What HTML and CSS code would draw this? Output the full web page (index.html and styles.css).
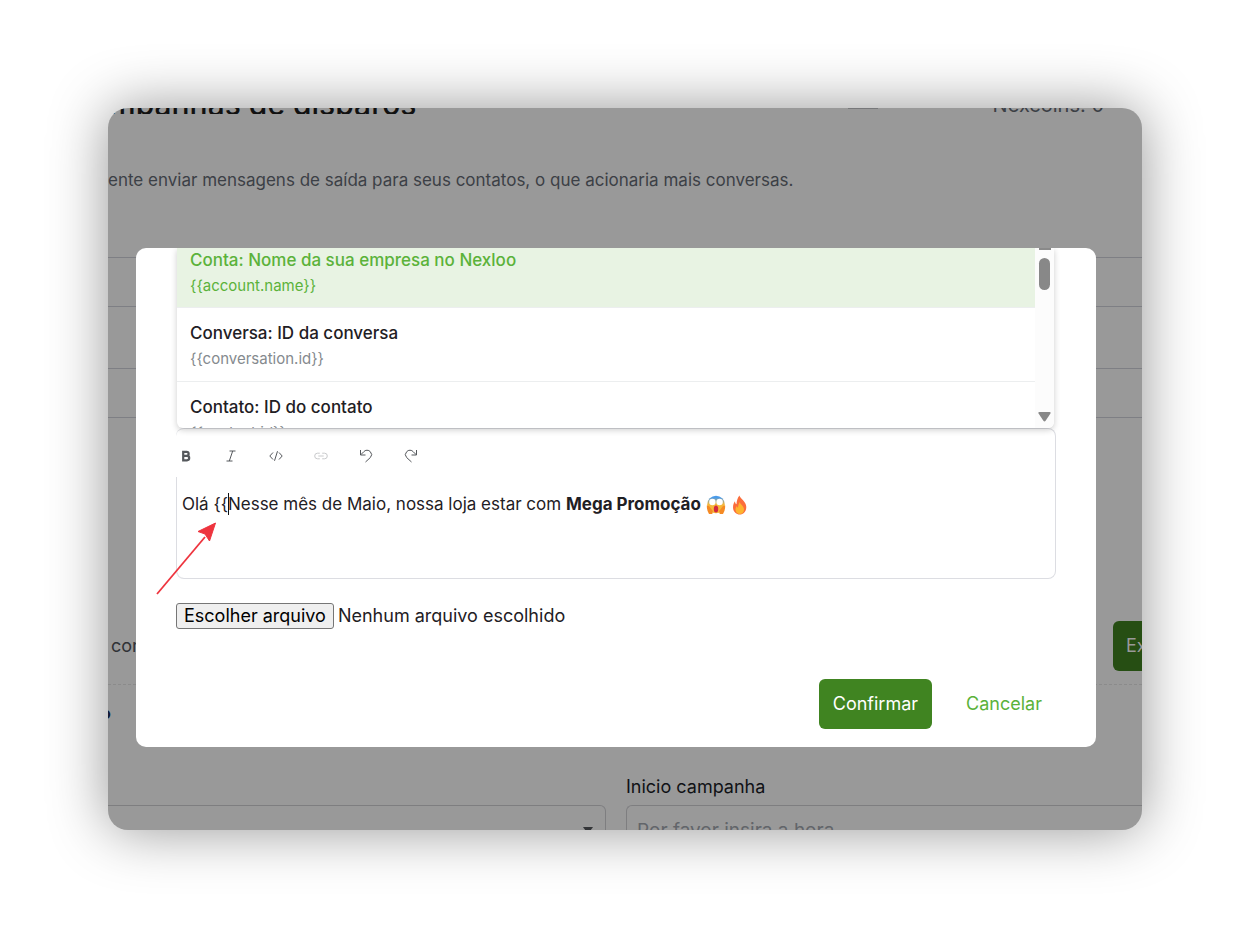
FILE: index.html
```html
<!DOCTYPE html>
<html lang="pt-BR">
<head>
<meta charset="utf-8">
<title>Campanhas de disparos</title>
<link rel="stylesheet" href="styles.css">
</head>
<body>
<main class="frame">
  <section class="page">
    <header class="page-head">
      <h1 class="title">Campanhas de disparos</h1>
      <span class="tab-line"></span>
      <span class="coins">Nexcoins: 0</span>
    </header>
    <p class="intro">ente enviar mensagens de saída para seus contatos, o que acionaria mais conversas.</p>
    <div class="rows">
      <div class="row"></div>
      <div class="row row-tall"></div>
      <div class="row"></div>
    </div>
    <div class="export-row">
      <span>com</span>
      <button class="btn-export" type="button">Exportar</button>
    </div>
    <p class="step">o</p>
    <div class="fields">
      <div class="field">
        <span class="field-label"></span>
        <div class="control control-left"><svg width="10" height="7" viewBox="0 0 10 7"><path d="M0 0h10L5 7z" fill="#333538"/></svg></div>
      </div>
      <div class="field field-right">
        <label class="field-label" for="start">Inicio campanha</label>
        <input class="control control-right" id="start" type="text" placeholder="Por favor insira a hora">
      </div>
    </div>
  </section>

  <div class="overlay">
    <section class="modal" role="dialog" aria-label="Mensagem">
      <div class="suggestions">
        <ul class="options">
          <li class="option option-active"><span class="option-name">Conta: Nome da sua empresa no Nexloo</span><span class="option-key">{{account.name}}</span></li>
          <li class="option"><span class="option-name">Conversa: ID da conversa</span><span class="option-key">{{conversation.id}}</span></li>
          <li class="option"><span class="option-name">Contato: ID do contato</span><span class="option-key">{{contact.id}}</span></li>
        </ul>
        <div class="scrollbar">
          <span class="scroll-up"></span>
          <span class="thumb"></span>
          <svg class="scroll-down" width="13" height="10" viewBox="0 0 13 10"><path d="M1.500 0h10Q13.300.2 12.300 1.800L7.600 8.800Q6.500 10.200 5.400 8.800L.7 1.800Q-.3.2 1.500 0z" fill="#888"/></svg>
        </div>
      </div>

      <div class="editor">
        <div class="toolbar">
          <button type="button" class="tool" aria-label="Negrito"><svg viewBox="0 0 16 16"><path d="M5.200 3.800h3.400a2 2 0 0 1 0 4.100H5.200zm0 4.100h3.800a2.200 2.200 0 0 1 0 4.400H5.200z" stroke-width="2.200"/></svg></button>
          <button type="button" class="tool" aria-label="Itálico"><svg viewBox="0 0 16 16"><path d="M6.500 3h6M3.500 13h6M9.700 3l-3.400 10"/></svg></button>
          <button type="button" class="tool" aria-label="Código"><svg viewBox="0 0 16 16"><path d="M5 4.500L1.800 8 5 11.500M11 4.500L14.200 8 11 11.500M9.500 3.200l-3 9.600"/></svg></button>
          <button type="button" class="tool tool-off" aria-label="Link" disabled><svg viewBox="0 0 16 16"><path d="M6.800 5.200H4.500a2.800 2.800 0 0 0 0 5.600h2.300M9.200 5.200h2.300a2.800 2.800 0 0 1 0 5.600H9.200M5.300 8h5.400"/></svg></button>
          <button type="button" class="tool" aria-label="Desfazer"><svg viewBox="0 0 16 16"><path d="M2.500 2v5h5M2.700 6.800l3-3a4.300 4.300 0 0 1 6.600-.1 4.200 4.200 0 0 1 0 5.900L7.500 14"/></svg></button>
          <button type="button" class="tool" aria-label="Refazer"><svg viewBox="0 0 16 16"><path d="M13.500 2v5h-5M13.300 6.800l-3-3a4.300 4.300 0 0 0-6.600-.1 4.200 4.200 0 0 0 0 5.900L8.500 14"/></svg></button>
        </div>
        <div class="message" role="textbox" aria-label="Mensagem" contenteditable="true" spellcheck="false">Olá {{<span class="caret"></span>Nesse mês de Maio, nossa loja estar com <strong>Mega Promoção</strong> <svg class="emoji" viewBox="0 0 20 20"><defs><linearGradient id="face" x1="0" y1="0" x2="0" y2="1"><stop offset=".1" stop-color="#4a9bea"/><stop offset=".5" stop-color="#f5b73b"/></linearGradient></defs><circle cx="10" cy="9.500" r="8.800" fill="url(#face)"/><circle cx="6.400" cy="7" r="3.200" fill="#fff"/><circle cx="13.600" cy="7" r="3.200" fill="#fff"/><path d="M.8 10.500q2-.5 3 1.500l3 4-.5 3H3Q.8 16 .8 10.500zM19.200 10.500q-2-.5-3 1.500l-3 4 .5 3H17q2.200-3 2.200-8.500z" fill="#f58a24"/><ellipse cx="10" cy="14" rx="2.200" ry="3.500" fill="#d3273e"/></svg> <svg class="emoji" viewBox="0 0 20 20"><path d="M9.500.5c.5 3 6.800 6 6.800 11.500 0 4.600-2.900 7.500-6.500 7.500S3 16.500 3 12.200c0-2.700 1-4.800 2-6 0 1.600.5 2.500 1.500 3C6.700 6 7.500 2.500 9.500.5z" fill="#fb6d3b"/><path d="M9.800 7c.3 2.500 4.200 4 4.200 7.400 0 2.800-1.700 4.600-4.200 4.600s-4.300-1.800-4.300-4.500c0-1.400.6-2.700 1.400-3.400 0 1 .5 1.500 1.100 1.500.3-2 .6-4 1.800-5.600z" fill="#fdb42e"/></svg></div>
        <svg class="pointer" width="62" height="76" viewBox="0 0 62 76"><path d="M2 73L50 16" stroke="#ee343e" stroke-width="1.800"/><path d="M60.500 2L43 10.500l7 2.500 4.500 7z" fill="#ee343e" stroke="#ee343e"/></svg>
      </div>

      <label class="file"><input class="file-input" type="file"><span class="file-btn">Escolher arquivo</span><span>Nenhum arquivo escolhido</span></label>

      <footer class="actions">
        <button type="button" class="btn btn-primary">Confirmar</button>
        <button type="button" class="btn btn-link">Cancelar</button>
      </footer>
    </section>
  </div>
</main>
</body>
</html>
```
FILE: styles.css
```css
* { box-sizing: border-box; }
body {
  margin: 0;
  padding: 108px;
  background: #fff;
  color: #1f2024;
  font: 18px/24px Inter, "Open Sans", sans-serif;
}
h1, p, ul { margin: 0; padding: 0; }
button, input { font: inherit; }

.frame {
  display: grid;
  overflow: hidden;
  border-radius: 20px;
  background: #999;
  box-shadow: 0 0 58px rgba(0, 0, 0, .42);
}
.page, .overlay { grid-area: 1 / 1; min-width: 0; }

.page-head {
  display: flex;
  align-items: flex-end;
  height: 6px;
  overflow: hidden;
}
.title {
  flex: 1;
  margin: 0 0 -8px -38px;
  color: #111;
  font-size: 30px;
  line-height: 36px;
  font-weight: 500;
}
.tab-line { width: 30px; height: 1px; margin: 0 115px 5px 0; background: #77787a; }
.coins { margin: 0 38px -3px 0; color: #3c4046; font-size: 20px; }
.intro { margin-top: 54px; color: #3c4046; font-size: 17px; white-space: nowrap; }

.rows { margin-top: 65px; border-bottom: 1px solid #7e7f84; }
.row { height: 49px; border-top: 1px solid #7e7f84; }
.row-tall { height: 62px; }

.export-row {
  display: flex;
  align-items: center;
  justify-content: space-between;
  margin-top: 203px;
  padding: 0 0 13px 3px;
  border-bottom: 1px dashed #8b8b8b;
  color: #303236;
}
.btn-export {
  width: 100px;
  height: 50px;
  margin-right: -71px;
  padding: 0 13px;
  border: 0;
  border-radius: 6px;
  background: #264e13;
  color: #999;
  text-align: left;
}
.step { margin: 16px 0 0 -7px; color: #101a30; font-size: 16px; font-weight: 700; }

.fields {
  display: grid;
  grid-template-columns: 498px 1fr;
  gap: 20px;
  height: 105px;
  padding-top: 50px;
  overflow: hidden;
}
.field { display: flex; flex-direction: column; gap: 6px; min-width: 0; }
.field-label { height: 24px; color: #101115; }
.control {
  height: 50px;
  flex: none;
  border: 1px solid #7e7e80;
  border-radius: 6px;
  background: transparent;
}
.control-left {
  display: flex;
  align-items: center;
  justify-content: flex-end;
  padding-right: 12px;
  border-left: 0;
  border-radius: 0 6px 6px 0;
}
.control-right { width: 100%; padding: 0 10px; border-right: 0; border-radius: 6px 0 0 6px; font-size: 19px; }
.control-right::placeholder { color: #62656a; opacity: 1; }

.overlay { padding: 140px 46px 82px 28px; }
.modal {
  overflow: hidden;
  padding: 0 40px 18px;
  border-radius: 10px;
  background: #fff;
}
.suggestions {
  position: relative;
  z-index: 1;
  display: flex;
  height: 180px;
  margin: 0 2px 0 1px;
  overflow: hidden;
  border-radius: 0 0 6px 6px;
  background: #fff;
  box-shadow: 0 2px 6px rgba(0, 0, 0, .2);
}
.options { flex: 1; list-style: none; }
.option {
  display: flex;
  flex-direction: column;
  gap: 3px;
  height: 74px;
  padding: 13px 13px 0;
  border-bottom: 1px solid #eceeef;
}
.option-active {
  height: 60px;
  padding-top: 0;
  background: #e8f3e3;
  color: #5bb23a;
}
.option-name { font-size: 17px; font-weight: 500; }
.option-key { color: #858a8e; font-size: 15px; line-height: 22px; }
.option-active .option-key { color: #5bb23a; }
.scrollbar {
  display: flex;
  flex-direction: column;
  align-items: center;
  width: 19px;
  padding-bottom: 6px;
  background: #fcfcfc;
}
.scroll-up { width: 12px; height: 2px; background: #8a8a8a; }
.thumb { width: 11px; height: 32px; margin-top: 8px; border-radius: 6px; background: #888; }
.scroll-down { flex: none; margin-top: auto; }

.editor {
  position: relative;
  border: solid #dcdde2;
  border-width: 1px 1px 1px 0;
  border-radius: 8px;
}
.toolbar { display: flex; gap: 29px; padding: 19px 2px 13px; }
.tool {
  display: block;
  width: 16px;
  height: 16px;
  padding: 0;
  border: 0;
  background: none;
  color: #55585c;
}
.tool-off { color: #c9cacc; }
.tool svg {
  display: block;
  width: 16px;
  height: 16px;
  fill: none;
  stroke: currentColor;
}
.message {
  height: 101px;
  padding: 15px 5px;
  border-left: 1px solid #dcdde2;
  border-radius: 0 0 0 8px;
  outline: 0;
  font-size: 17px;
}
.caret { display: inline-block; width: 1px; height: 22px; margin-right: -1px; background: #111; vertical-align: -5px; }
.emoji { width: 20px; height: 20px; vertical-align: -5px; }
.pointer { position: absolute; left: -21px; top: 92px; }

.file { display: flex; align-items: center; gap: 4px; margin-top: 24px; }
.file-input { position: absolute; width: 1px; height: 1px; opacity: 0; }
.file-btn {
  padding: 0 7px;
  border: 1px solid #767676;
  border-radius: 3px;
  background: #efefef;
  color: #000;
}
.actions { display: flex; justify-content: flex-end; margin-top: 50px; }
.btn { height: 50px; padding: 0 14px; border: 0; border-radius: 6px; }
.btn-primary { background: #408421; color: #fff; }
.btn-link { margin-left: 20px; background: none; color: #5bb23a; }
```
